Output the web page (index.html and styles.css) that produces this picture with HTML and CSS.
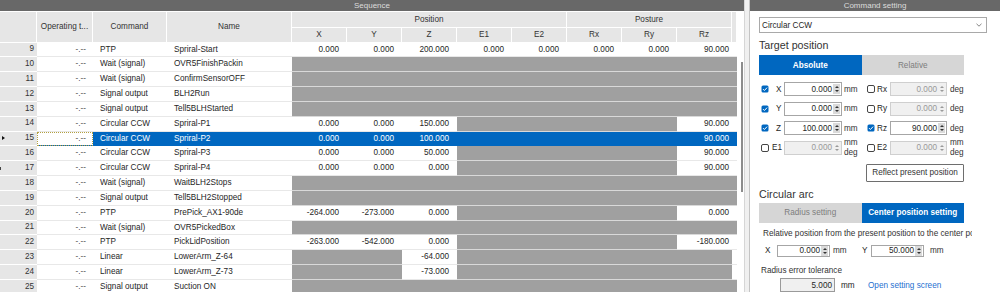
FILE: index.html
```html
<!doctype html>
<html>
<head>
    <meta charset="utf-8">
    <title>Sequence</title>
    <link rel="stylesheet" href="styles.css">
</head>
<body>
<div id="app">
    <div id="seq">
        <div class="bar">Sequence</div>
        <div class="seq-body">
            <div class="grid">
                <div class="head">
                    <div class="h span-v c1"></div>
                    <div class="h span-v c2">Operating t...</div>
                    <div class="h span-v c3">Command</div>
                    <div class="h span-v c4">Name</div>
                    <div class="h pos-h">Position</div>
                    <div class="h pst-h">Posture</div>
                    <div class="h span-v c13"></div>
                    <div class="h r2">X</div>
                    <div class="h r2">Y</div>
                    <div class="h r2">Z</div>
                    <div class="h r2">E1</div>
                    <div class="h r2">E2</div>
                    <div class="h r2">Rx</div>
                    <div class="h r2">Ry</div>
                    <div class="h r2">Rz</div>
                </div>

                <div class="row">
                    <div class="rh">9</div><div class="n op">-.--</div><div class="t">PTP</div><div class="t">Spriral-Start</div>
                    <div class="n">0.000</div><div class="n">0.000</div><div class="n">200.000</div><div class="n">0.000</div><div class="n">0.000</div><div class="n">0.000</div><div class="n">0.000</div><div class="n sp2">90.000</div>
                </div>
                <div class="row">
                    <div class="rh">10</div><div class="n op">-.--</div><div class="t">Wait (signal)</div><div class="t">OVR5FinishPackin</div><div class="off sp9"></div>
                </div>
                <div class="row">
                    <div class="rh">11</div><div class="n op">-.--</div><div class="t">Wait (signal)</div><div class="t">ConfirmSensorOFF</div><div class="off sp9"></div>
                </div>
                <div class="row">
                    <div class="rh">12</div><div class="n op">-.--</div><div class="t">Signal output</div><div class="t">BLH2Run</div><div class="off sp9"></div>
                </div>
                <div class="row">
                    <div class="rh">13</div><div class="n op">-.--</div><div class="t">Signal output</div><div class="t">Tell5BLHStarted</div><div class="off sp9"></div>
                </div>
                <div class="row">
                    <div class="rh">14</div><div class="n op">-.--</div><div class="t">Circular CCW</div><div class="t">Spriral-P1</div>
                    <div class="n">0.000</div><div class="n">0.000</div><div class="n">150.000</div><div class="off sp4"></div><div class="n sp2">90.000</div>
                </div>
                <div class="row sel">
                    <div class="rh"><i class="mark"></i>15</div><div class="n op focus">-.--</div><div class="t">Circular CCW</div><div class="t">Spriral-P2</div>
                    <div class="n">0.000</div><div class="n">0.000</div><div class="n">100.000</div><div class="sp4"></div><div class="n sp2">90.000</div>
                </div>
                <div class="row">
                    <div class="rh">16</div><div class="n op">-.--</div><div class="t">Circular CCW</div><div class="t">Spriral-P3</div>
                    <div class="n">0.000</div><div class="n">0.000</div><div class="n">50.000</div><div class="off sp4"></div><div class="n sp2">90.000</div>
                </div>
                <div class="row">
                    <div class="rh"><i class="dot"></i>17</div><div class="n op">-.--</div><div class="t">Circular CCW</div><div class="t">Spriral-P4</div>
                    <div class="n">0.000</div><div class="n">0.000</div><div class="n">0.000</div><div class="off sp4"></div><div class="n sp2">90.000</div>
                </div>
                <div class="row">
                    <div class="rh">18</div><div class="n op">-.--</div><div class="t">Wait (signal)</div><div class="t">WaitBLH2Stops</div><div class="off sp9"></div>
                </div>
                <div class="row">
                    <div class="rh">19</div><div class="n op">-.--</div><div class="t">Signal output</div><div class="t">Tell5BLH2Stopped</div><div class="off sp9"></div>
                </div>
                <div class="row">
                    <div class="rh">20</div><div class="n op">-.--</div><div class="t">PTP</div><div class="t">PrePick_AX1-90de</div>
                    <div class="n">-264.000</div><div class="n">-273.000</div><div class="n">0.000</div><div class="off sp4"></div><div class="n sp2">0.000</div>
                </div>
                <div class="row">
                    <div class="rh">21</div><div class="n op">-.--</div><div class="t">Wait (signal)</div><div class="t">OVR5PickedBox</div><div class="off sp9"></div>
                </div>
                <div class="row">
                    <div class="rh">22</div><div class="n op">-.--</div><div class="t">PTP</div><div class="t">PickLidPosition</div>
                    <div class="n">-263.000</div><div class="n">-542.000</div><div class="n">0.000</div><div class="off sp4"></div><div class="n sp2">-180.000</div>
                </div>
                <div class="row">
                    <div class="rh">23</div><div class="n op">-.--</div><div class="t">Linear</div><div class="t">LowerArm_Z-64</div>
                    <div class="off sp2"></div><div class="n">-64.000</div><div class="off sp5"></div><div></div>
                </div>
                <div class="row">
                    <div class="rh">24</div><div class="n op">-.--</div><div class="t">Linear</div><div class="t">LowerArm_Z-73</div>
                    <div class="off sp2"></div><div class="n">-73.000</div><div class="off sp5"></div><div></div>
                </div>
                <div class="row">
                    <div class="rh">25</div><div class="n op">-.--</div><div class="t">Signal output</div><div class="t">Suction ON</div><div class="off sp9"></div>
                </div>
            </div>
            <div class="vscroll"><div class="thumb"></div></div>
        </div>
    </div>

    <div id="cmd">
        <div class="bar">Command setting</div>
        <div class="cmd-body">
            <div class="select">
                <span>Circular CCW</span>
                <svg width="6" height="4" viewBox="0 0 6 4"><polyline points="0.5,0.8 3,3.2 5.5,0.8" fill="none" stroke="#777" stroke-width="0.9"/></svg>
            </div>

            <div class="heading">Target position</div>
            <div class="tabs">
                <div class="tab on">Absolute</div>
                <div class="tab">Relative</div>
            </div>

            <div class="axes">
                <div class="axis">
                    <svg class="cb" viewBox="0 0 8 8"><rect x=".5" y=".5" width="7" height="7" rx="1.5" fill="#0067c0"/><path d="M2 4.1l1.4 1.4 2.7-2.9" fill="none" stroke="#fff" stroke-width="1"/></svg>
                    <span class="lbl lx">X</span>
                    <div class="inp w58"><span>0.000</span><i class="spin"></i></div>
                    <span class="unit">mm</span>
                    <svg class="cb" viewBox="0 0 8 8"><rect x=".5" y=".5" width="7" height="7" rx="1.5" fill="#fff" stroke="#444"/></svg>
                    <span class="lbl lbl2">Rx</span>
                    <div class="inp w57 dis"><span>0.000</span><i class="spin"></i></div>
                    <span class="unit unit-r">deg</span>
                </div>
                <div class="axis">
                    <svg class="cb" viewBox="0 0 8 8"><rect x=".5" y=".5" width="7" height="7" rx="1.5" fill="#0067c0"/><path d="M2 4.1l1.4 1.4 2.7-2.9" fill="none" stroke="#fff" stroke-width="1"/></svg>
                    <span class="lbl lx">Y</span>
                    <div class="inp w58"><span>0.000</span><i class="spin"></i></div>
                    <span class="unit">mm</span>
                    <svg class="cb" viewBox="0 0 8 8"><rect x=".5" y=".5" width="7" height="7" rx="1.5" fill="#fff" stroke="#444"/></svg>
                    <span class="lbl lbl2">Ry</span>
                    <div class="inp w57 dis"><span>0.000</span><i class="spin"></i></div>
                    <span class="unit unit-r">deg</span>
                </div>
                <div class="axis">
                    <svg class="cb" viewBox="0 0 8 8"><rect x=".5" y=".5" width="7" height="7" rx="1.5" fill="#0067c0"/><path d="M2 4.1l1.4 1.4 2.7-2.9" fill="none" stroke="#fff" stroke-width="1"/></svg>
                    <span class="lbl lx">Z</span>
                    <div class="inp w58"><span>100.000</span><i class="spin"></i></div>
                    <span class="unit">mm</span>
                    <svg class="cb" viewBox="0 0 8 8"><rect x=".5" y=".5" width="7" height="7" rx="1.5" fill="#0067c0"/><path d="M2 4.1l1.4 1.4 2.7-2.9" fill="none" stroke="#fff" stroke-width="1"/></svg>
                    <span class="lbl lbl2">Rz</span>
                    <div class="inp w57"><span>90.000</span><i class="spin"></i></div>
                    <span class="unit unit-r">deg</span>
                </div>
                <div class="axis">
                    <svg class="cb" viewBox="0 0 8 8"><rect x=".5" y=".5" width="7" height="7" rx="1.5" fill="#fff" stroke="#444"/></svg>
                    <span class="lbl">E1</span>
                    <div class="inp w58 dis"><span>0.000</span><i class="spin"></i></div>
                    <span class="unit stack"><span>mm</span><span>deg</span></span>
                    <svg class="cb" viewBox="0 0 8 8"><rect x=".5" y=".5" width="7" height="7" rx="1.5" fill="#fff" stroke="#444"/></svg>
                    <span class="lbl lbl2">E2</span>
                    <div class="inp w57 dis"><span>0.000</span><i class="spin"></i></div>
                    <span class="unit unit-r stack"><span>mm</span><span>deg</span></span>
                </div>
            </div>

            <div class="actions"><button class="btn">Reflect present position</button></div>

            <div class="heading heading-arc">Circular arc</div>
            <div class="tabs tabs-arc">
                <div class="tab">Radius setting</div>
                <div class="tab on">Center position setting</div>
            </div>

            <div class="note">Relative position from the present position to the center point</div>
            <div class="center">
                <span class="clbl">X</span>
                <div class="inp w53"><span>0.000</span><i class="spin"></i></div>
                <span class="cunit">mm</span>
                <span class="clbl clbl2">Y</span>
                <div class="inp w53"><span>50.000</span><i class="spin"></i></div>
                <span class="cunit">mm</span>
            </div>

            <div class="note note2">Radius error tolerance</div>
            <div class="tol">
                <div class="inp w55 ro"><span>5.000</span></div>
                <span class="tunit">mm</span>
                <a href="#" class="link">Open setting screen</a>
            </div>
        </div>
    </div>
</div>
</body>
</html>
```

FILE: styles.css
```css
*{box-sizing:border-box;}
body{margin:0; width:1000px; height:292px; overflow:hidden; background:#f0f0f0; font-family:"Liberation Sans","Noto Sans CJK JP",sans-serif; font-size:8.2px; color:#262626;}
#app{display:flex; gap:4px; height:292px;}

/* sequence table */
#seq{width:745px; background:#fff; border-right:1px solid #d6d6d6; overflow:hidden;}
.bar{height:11px; line-height:11px; background:#686868; color:#dcdcdc; text-align:center; font-size:8px;}
.seq-body{display:flex;}
.grid{width:737px; margin-top:1px;}
.head,.row{display:grid; grid-template-columns:37px 56px 74px 125px repeat(8,55px) 5px;}
.head{grid-template-rows:15.5px 15px;}
.h{background:#e6e6e6; border-right:1px solid #fff; border-bottom:1px solid #fff; display:flex; align-items:center; justify-content:center; color:#333; white-space:nowrap; overflow:hidden;}
.span-v{grid-row:1/3;}
.c1{grid-column:1;}
.c2{grid-column:2;}
.c3{grid-column:3;}
.c4{grid-column:4;}
.c13{grid-column:13;}
.pos-h{grid-row:1; grid-column:5/10;}
.pst-h{grid-row:1; grid-column:10/13;}
.r2{grid-row:2;}

.row{height:14.85px;}
.row>div{border-bottom:1px solid #e8e8e8; line-height:14.4px; white-space:nowrap; overflow:hidden;}
.rh{background:#e6e6e6; border-bottom-color:#fff !important; display:flex; align-items:center; justify-content:flex-end; padding:0 3px 0 2px; color:#333;}
.n{text-align:right; padding-right:8px;}
.op{padding-right:7px; color:#555;}
.t{padding-left:7px;}
.off{background:#a0a0a0; border-bottom-color:#d9d9d9 !important;}
.sp2{grid-column:span 2;}
.sp4{grid-column:span 4;}
.sp5{grid-column:span 5;}
.sp9{grid-column:span 9;}
.sel>div{background:#0067c0; color:#fff; border-bottom-color:#0067c0;}
.sel>.rh{background:#e6e6e6; color:#333;}
.sel>.focus{background:#fff; color:#555; outline:1px dotted #b3a042; outline-offset:-1px;}
.mark{width:0; height:0; border-left:3px solid #111; border-top:2.5px solid transparent; border-bottom:2.5px solid transparent; margin-right:auto;}
.dot{width:1px; height:3px; background:#444; margin-left:-2px; margin-right:auto;}

.vscroll{width:8px;}
.thumb{width:2px; height:130px; margin:51px 0 0 4px; background:#8c8c8c;}

/* command setting */
#cmd{flex:1; background:#fff; border-left:1px solid #c4c4c4;}
.cmd-body{padding:6px 13px 0 9px;}
.select{height:16px; border:1px solid #a9a9a9; display:flex; align-items:center; justify-content:space-between; padding:0 4px 0 2px;}
.heading{font-size:10.7px; line-height:14px; color:#333; margin-top:5px;}
.tabs{display:flex; width:205px; height:20px; margin-top:3px;}
.tab{flex:1; display:flex; align-items:center; justify-content:center; background:#d6d6d6; color:#7d7d7d;}
.tab.on{background:#0067c0; color:#fff; font-weight:bold;}

.axes{margin-top:7px; display:flex; flex-direction:column; gap:5.6px;}
.axis{height:14px; display:flex; align-items:center; padding-left:2px;}
.cb{width:8px; height:8px; flex:none;}
.lbl{width:12px; margin-left:3px;}
.lx{padding-left:4px;}
.lbl2{width:13px; margin-left:2px;}
.inp{height:14px; display:flex; align-items:center; justify-content:flex-end; border:1px solid #a6a6a6; background:#fff; padding-right:1px; flex:none;}
.inp.dis{background:#f0f0f0; border-color:#cfcfcf; color:#999;}
.inp.ro{background:#f0f0f0; border-color:#9a9a9a; padding-right:2px;}
.w58{width:58px;}
.w57{width:57px;}
.w55{width:55px;}
.w53{width:53px; height:12px;}
.spin{width:7px; height:10px; margin-left:1px; background:#dadada; display:flex; flex-direction:column; align-items:center; justify-content:center; gap:2px;}
.spin::before{content:""; border-left:2px solid transparent; border-right:2px solid transparent; border-bottom:2px solid #333;}
.spin::after{content:""; border-left:2px solid transparent; border-right:2px solid transparent; border-top:2px solid #333;}
.dis .spin{background:none;}
.dis .spin::before{border-bottom-color:#9a9a9a;}
.dis .spin::after{border-top-color:#9a9a9a;}
.unit{width:23px; margin-left:2px; color:#333;}
.unit-r{margin-left:3px;}
.stack{display:flex; flex-direction:column; line-height:10px;}

.actions{width:205px; margin-top:9px; display:flex; justify-content:flex-end;}
.btn{width:98px; height:18px; padding:0; background:#fff; border:1px solid #6e6e6e; border-radius:1px; font:inherit; color:#333;}

.heading-arc{margin-top:5px;}
.tabs-arc{margin-top:2px;}
.note{width:213px; margin-top:6px; padding-left:4px; line-height:10px; white-space:nowrap; overflow:hidden; color:#333;}
.note2{margin-top:9px; padding-left:2px;}
.center{height:12px; margin-top:6px; display:flex; align-items:center; padding-left:6px;}
.clbl{width:12px;}
.clbl2{width:9px;}
.cunit{width:29px; margin-left:3px; color:#333;}
.center .cunit:last-child{margin-left:6px;}
.tol{height:14px; margin-top:2.7px; display:flex; align-items:center; padding-left:21px;}
.tunit{margin-left:6px; width:27px;}
.link{color:#1f6fd0; text-decoration:none;}
```
